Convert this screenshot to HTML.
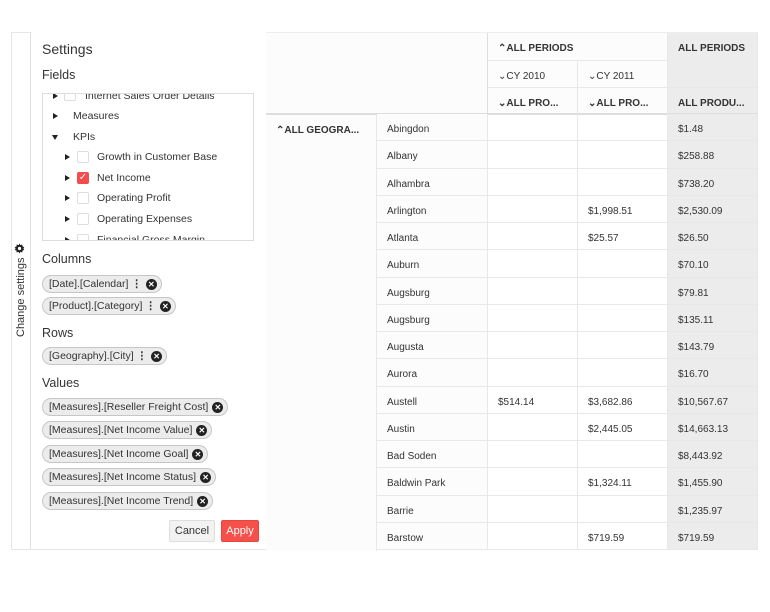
<!DOCTYPE html>
<html><head><meta charset="utf-8"><style>
*{box-sizing:border-box;margin:0;padding:0}
body{width:770px;height:612px;background:#fff;font-family:"Liberation Sans",Arial,sans-serif;color:#333;position:relative;overflow:hidden}
.a{position:absolute}
.strip{left:11px;top:32px;width:20px;height:518px;border:1px solid #e6e6e6;border-right:1px solid #e0e0e0;background:#fff}
.vt{left:14px;top:337px;transform-origin:0 0;transform:rotate(-90deg);font-size:11px;white-space:nowrap;color:#333;line-height:13px}
.panel{left:30px;top:32px;width:237px;height:518px;border-bottom:1px solid #e6e6e6;border-right:1px solid #e6e6e6}
.h{font-size:14px;color:#333}
.lbl{font-size:12.5px;color:#333}
.tree{left:42px;top:93px;width:212px;height:148px;border:1px solid #ddd;overflow:hidden}
.ti{position:absolute;font-size:10.5px;color:#333;white-space:nowrap}
.tri{position:absolute;width:0;height:0;border-top:3.5px solid transparent;border-bottom:3.5px solid transparent;border-left:5px solid #222}
.trid{position:absolute;width:0;height:0;border-left:3.5px solid transparent;border-right:3.5px solid transparent;border-top:5px solid #222}
.cb{position:absolute;width:12px;height:12px;border:1px solid #ddd;background:#fff;border-radius:2px}
.chip{position:absolute;left:42px;height:18px;border:1px solid #c6c6c6;background:#ececec;border-radius:9px;font-size:10.5px;padding:0 4px 0 6px;color:#333;white-space:nowrap;display:flex;align-items:center}
.x{display:inline-block;width:11px;height:11px;border-radius:50%;background:#222;color:#fff;font-size:8px;line-height:11px;text-align:center;font-weight:bold;margin-left:4px}
.dots{display:inline-block;font-weight:bold;margin-left:3px}
.btn{position:absolute;height:22px;font-size:11px;line-height:20px;text-align:center;border-radius:2px}
.g{left:266px;top:32px;width:492px;height:518px;border-top:1px solid #eee}
.c{position:absolute;font-size:10px;line-height:27px;padding:2px 0 0 10px;white-space:nowrap;color:#333;border-bottom:1px solid #e8e8e8;border-right:1px solid #e8e8e8}
.b{font-weight:bold}
</style></head><body>
<div class="a strip"></div>
<div class="a vt">Change settings <svg width="11" height="11" viewBox="0 0 12 12" style="vertical-align:-1px;transform:rotate(90deg)"><path d="M6 0.5l1 1.8 2-.6.3 2 1.9.9-1 1.4 1 1.4-1.9.9-.3 2-2-.6-1 1.8-1-1.8-2 .6-.3-2-1.9-.9 1-1.4-1-1.4 1.9-.9.3-2 2 .6z" fill="#222"/><circle cx="6" cy="6" r="1.8" fill="#fff"/></svg></div>
<div class="a panel"></div>
<div class="a h" style="left:42px;top:41px">Settings</div>
<div class="a lbl" style="left:42px;top:68px">Fields</div>
<div class="a tree">
 <div class="tri" style="left:10px;top:-1px"></div><div class="cb" style="left:21px;top:-5px"></div><div class="ti" style="left:42px;top:-4px">Internet Sales Order Details</div>
 <div class="tri" style="left:10px;top:19px"></div><div class="ti" style="left:30px;top:16px">Measures</div>
 <div class="trid" style="left:9px;top:41px"></div><div class="ti" style="left:30px;top:37px">KPIs</div>
 <div class="tri" style="left:22px;top:60px"></div><div class="cb" style="left:34px;top:57px"></div><div class="ti" style="left:54px;top:57px">Growth in Customer Base</div>
 <div class="tri" style="left:22px;top:81px"></div><div class="cb" style="left:34px;top:78px;background:#f44c4c;border-color:#f44c4c;color:#fff;font-size:10px;line-height:10px;text-align:center">✓</div><div class="ti" style="left:54px;top:78px">Net Income</div>
 <div class="tri" style="left:22px;top:101px"></div><div class="cb" style="left:34px;top:98px"></div><div class="ti" style="left:54px;top:98px">Operating Profit</div>
 <div class="tri" style="left:22px;top:122px"></div><div class="cb" style="left:34px;top:119px"></div><div class="ti" style="left:54px;top:119px">Operating Expenses</div>
 <div class="tri" style="left:22px;top:143px"></div><div class="cb" style="left:34px;top:140px"></div><div class="ti" style="left:54px;top:140px">Financial Gross Margin</div>
</div>
<div class="a lbl" style="left:42px;top:252px">Columns</div>
<div class="chip" style="top:275px">[Date].[Calendar]<span class="dots">⋮</span><span class="x">✕</span></div>
<div class="chip" style="top:297px">[Product].[Category]<span class="dots">⋮</span><span class="x">✕</span></div>
<div class="a lbl" style="left:42px;top:326px">Rows</div>
<div class="chip" style="top:347px">[Geography].[City]<span class="dots">⋮</span><span class="x">✕</span></div>
<div class="a lbl" style="left:42px;top:376px">Values</div>
<div class="chip" style="top:398px">[Measures].[Reseller Freight Cost]<span class="x">✕</span></div>
<div class="chip" style="top:421px">[Measures].[Net Income Value]<span class="x">✕</span></div>
<div class="chip" style="top:445px">[Measures].[Net Income Goal]<span class="x">✕</span></div>
<div class="chip" style="top:468px">[Measures].[Net Income Status]<span class="x">✕</span></div>
<div class="chip" style="top:492px">[Measures].[Net Income Trend]<span class="x">✕</span></div>
<div class="btn" style="left:169px;top:520px;width:46px;background:#f2f2f2;border:1px solid #ddd;color:#333">Cancel</div>
<div class="btn" style="left:221px;top:520px;width:38px;background:#f5504a;border:1px solid #e84540;color:#fff">Apply</div>

<div class="a g">
<div class="c" style="left:0;top:0;width:222px;height:82px;background:#fcfcfc;border-bottom:2px solid #ddd;border-right:1px solid #ddd"></div>
<div class="c b" style="left:222px;top:0;width:180px;height:28px;background:#fcfcfc">⌃ALL PERIODS</div>
<div class="c b" style="left:402px;top:0;width:90px;height:55px;background:#ececec">ALL PERIODS</div>
<div class="c" style="left:222px;top:28px;width:90px;height:27px;background:#fcfcfc">⌄CY 2010</div>
<div class="c" style="left:312px;top:28px;width:90px;height:27px;background:#fcfcfc">⌄CY 2011</div>
<div class="c b" style="left:222px;top:55px;width:90px;height:27px;background:#fcfcfc;border-bottom:2px solid #ddd">⌄ALL PRO...</div>
<div class="c b" style="left:312px;top:55px;width:90px;height:27px;background:#fcfcfc;border-bottom:2px solid #ddd">⌄ALL PRO...</div>
<div class="c b" style="left:402px;top:55px;width:90px;height:27px;background:#ececec;border-bottom:2px solid #ddd">ALL PRODU...</div>
<div class="c b" style="left:0;top:82px;width:111px;height:436px;background:#fcfcfc;border-bottom:none">⌃ALL GEOGRA...</div>
</div>
<div id="rows"></div>
<script>
var d=[["Abingdon","","","$1.48"],["Albany","","","$258.88"],["Alhambra","","","$738.20"],["Arlington","","$1,998.51","$2,530.09"],["Atlanta","","$25.57","$26.50"],["Auburn","","","$70.10"],["Augsburg","","","$79.81"],["Augsburg","","","$135.11"],["Augusta","","","$143.79"],["Aurora","","","$16.70"],["Austell","$514.14","$3,682.86","$10,567.67"],["Austin","","$2,445.05","$14,663.13"],["Bad Soden","","","$8,443.92"],["Baldwin Park","","$1,324.11","$1,455.90"],["Barrie","","","$1,235.97"],["Barstow","","$719.59","$719.59"]];
var h="";
for(var i=0;i<16;i++){var t=114+i*27.25;
h+='<div class="c" style="left:377px;top:'+t+'px;width:111px;height:27.25px;background:#fcfcfc">'+d[i][0]+'</div>';
h+='<div class="c" style="left:488px;top:'+t+'px;width:90px;height:27.25px">'+d[i][1]+'</div>';
h+='<div class="c" style="left:578px;top:'+t+'px;width:90px;height:27.25px">'+d[i][2]+'</div>';
h+='<div class="c" style="left:668px;top:'+t+'px;width:90px;height:27.25px;background:#ececec">'+d[i][3]+'</div>';}
document.getElementById("rows").innerHTML=h;
</script>
</body></html>
